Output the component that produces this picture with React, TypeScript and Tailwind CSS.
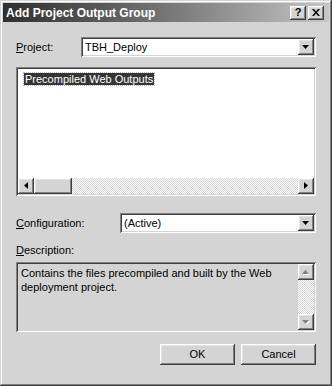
import type { ReactNode } from 'react'

const raised =
  'shadow-[inset_-1px_-1px_#404040,inset_1px_1px_#ffffff,inset_-2px_-2px_#808080,inset_2px_2px_#e2e2e2] bg-[#d4d4d4]'
const sunken =
  'shadow-[inset_1px_1px_#808080,inset_-1px_-1px_#ffffff,inset_2px_2px_#404040,inset_-2px_-2px_#d4d4d4]'
const track =
  'bg-[repeating-conic-gradient(#ffffff_0%_25%,#d4d4d4_0%_50%)] bg-[length:2px_2px]'

function Tri({ dir, disabled = false }: { dir: 'up' | 'down' | 'left' | 'right'; disabled?: boolean }) {
  const pts = {
    down: '0,0 7,0 3.5,4',
    up: '3.5,0 7,4 0,4',
    left: '4,0 4,7 0,3.5',
    right: '0,0 4,3.5 0,7',
  }[dir]
  const vertical = dir === 'up' || dir === 'down'
  const w = vertical ? 8 : 5
  const h = vertical ? 5 : 8
  return (
    <svg width={w} height={h} viewBox={`0 0 ${w} ${h}`}>
      {disabled && <polygon points={pts} fill="#ffffff" transform="translate(1,1)" />}
      <polygon points={pts} fill={disabled ? '#808080' : '#000000'} />
    </svg>
  )
}

function ScrollBtn({ dir, disabled }: { dir: 'up' | 'down' | 'left' | 'right'; disabled?: boolean }) {
  return (
    <div className={`flex h-[16px] w-[16px] shrink-0 items-center justify-center ${raised}`}>
      <Tri dir={dir} disabled={disabled} />
    </div>
  )
}

function Combo({ value }: { value: string }) {
  return (
    <div className={`flex h-[20px] flex-1 items-center bg-white p-[2px] ${sunken}`}>
      <span className="flex-1 pl-[2px] leading-none">{value}</span>
      <div className={`flex h-[16px] w-[16px] items-center justify-center ${raised}`}>
        <Tri dir="down" />
      </div>
    </div>
  )
}

function Label({ mn, rest, w }: { mn: string; rest: string; w?: string }) {
  return (
    <span className={`shrink-0 ${w ?? ''}`}>
      <u className="underline-offset-1">{mn}</u>
      {rest}
    </span>
  )
}

function Btn({ children }: { children: ReactNode }) {
  return (
    <div className={`flex h-[21px] w-[75px] items-center justify-center ${raised}`}>{children}</div>
  )
}

export default function App() {
  return (
    <div className="flex h-[386px] w-[332px] flex-col bg-[#d4d4d4] p-[3px] font-['Liberation_Sans',Arial,sans-serif] text-[11px] text-black shadow-[inset_-1px_-1px_#404040,inset_1px_1px_#d4d4d4,inset_-2px_-2px_#808080,inset_2px_2px_#ffffff]">
      <div className="flex h-[19px] items-center bg-linear-to-r from-[#2f2f2f] to-[#c6c6c6] pl-[3px] pr-[5px]">
        <span className="flex-1 text-[12px] font-bold text-white">Add Project Output Group</span>
        <div className={`flex h-[14px] w-[16px] items-center justify-center ${raised}`}>
          <span className="text-[11px] font-bold leading-none">?</span>
        </div>
        <div className={`ml-[2px] flex h-[14px] w-[16px] items-center justify-center ${raised}`}>
          <svg width="8" height="7" viewBox="0 0 8 7">
            <path d="M0 0h2l2 2.5L6 0h2L5 3.5 8 7H6L4 4.5 2 7H0l3-3.5z" fill="#000" />
          </svg>
        </div>
      </div>

      <div className="flex flex-1 flex-col px-[13px]">
        <div className="mt-[15px] flex items-center">
          <Label mn="P" rest="roject:" w="w-[65px]" />
          <Combo value="TBH_Deploy" />
        </div>

        <div className={`mt-[10px] flex h-[129px] flex-col bg-white p-[2px] ${sunken}`}>
          <div className="flex-1 pl-[6px] pt-[2px]">
            <span className="inline-block bg-[#353535] px-[1px] leading-[12px] text-white outline-1 outline-dotted outline-[#bbbbbb]">
              Precompiled Web Outputs
            </span>
          </div>
          <div className="flex h-[16px]">
            <ScrollBtn dir="left" />
            <div className={`h-[16px] w-[38px] ${raised}`} />
            <div className={`flex-1 ${track}`} />
            <ScrollBtn dir="right" />
          </div>
        </div>

        <div className="mt-[17px] flex items-center">
          <Label mn="C" rest="onfiguration:" w="w-[104px]" />
          <Combo value="(Active)" />
        </div>

        <div className="mt-[10px] leading-[14px]">
          <Label mn="D" rest="escription:" />
        </div>

        <div className={`mt-[5px] flex h-[70px] p-[2px] ${sunken}`}>
          <p className="flex-1 pl-[3px] pr-[4px] pt-[2px] leading-[14px]">
            Contains the files precompiled and built by the Web deployment project.
          </p>
          <div className="flex w-[16px] flex-col">
            <ScrollBtn dir="up" disabled />
            <div className={`flex-1 ${track}`} />
            <ScrollBtn dir="down" disabled />
          </div>
        </div>

        <div className="mt-[12px] flex justify-end gap-[6px]">
          <Btn>OK</Btn>
          <Btn>Cancel</Btn>
        </div>
      </div>
    </div>
  )
}
